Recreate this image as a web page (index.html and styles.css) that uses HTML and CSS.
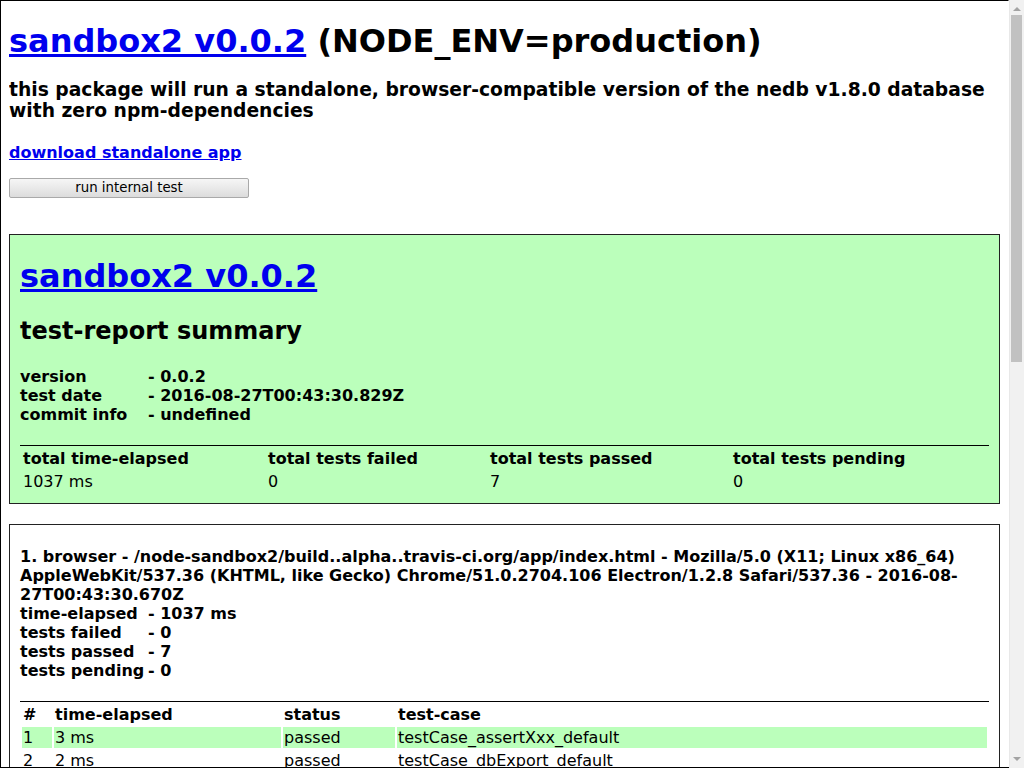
FILE: index.html
```html
<!DOCTYPE html>
<html lang="en">
<head>
<meta charset="utf-8">
<title>sandbox2 v0.0.2</title>
<link rel="stylesheet" href="styles.css">
</head>
<body>
<h1 class="page-title"><a href="#">sandbox2 v0.0.2</a> (NODE_ENV=production)</h1>
<h3 class="page-desc">this package will run a standalone, browser-compatible version of the nedb v1.8.0 database with zero npm-dependencies</h3>
<h4 class="page-download"><a href="#">download standalone app</a></h4>
<button class="test-button" type="button">run internal test</button>
<div class="test-report">
  <div class="platform summary">
    <h1><a href="#">sandbox2 v0.0.2</a></h1>
    <h2>test-report summary</h2>
    <h4>
      <span class="label">version</span>- 0.0.2<br>
      <span class="label">test date</span>- 2016-08-27T00:43:30.829Z<br>
      <span class="label">commit info</span>- undefined
    </h4>
    <table class="summary-table">
      <thead>
        <tr><th class="c1">total time-elapsed</th><th class="c2">total tests failed</th><th class="c3">total tests passed</th><th class="c4">total tests pending</th></tr>
      </thead>
      <tbody>
        <tr><td>1037 ms</td><td>0</td><td>7</td><td>0</td></tr>
      </tbody>
    </table>
  </div>
  <div class="platform">
    <h4 class="platform-info">1. browser - /node-sandbox2/build..alpha..travis-ci.org/app/index.html - Mozilla/5.0 (X11; Linux x86_64) AppleWebKit/537.36 (KHTML, like Gecko) Chrome/51.0.2704.106 Electron/1.2.8 Safari/537.36 - 2016-08-27T00:43:30.670Z<br>
      <span class="label">time-elapsed</span>- 1037 ms<br>
      <span class="label">tests failed</span>- 0<br>
      <span class="label">tests passed</span>- 7<br>
      <span class="label">tests pending</span>- 0
    </h4>
    <table class="case-table">
      <thead>
        <tr><th class="k1">#</th><th class="k2">time-elapsed</th><th class="k3">status</th><th class="k4">test-case</th></tr>
      </thead>
      <tbody>
        <tr><td>1</td><td>3 ms</td><td>passed</td><td>testCase_assertXxx_default</td></tr>
        <tr><td>2</td><td>2 ms</td><td>passed</td><td>testCase_dbExport_default</td></tr>
        <tr><td>3</td><td>12 ms</td><td>passed</td><td>testCase_dbImport_default</td></tr>
        <tr><td>4</td><td>5 ms</td><td>passed</td><td>testCase_dbReset_default</td></tr>
        <tr><td>5</td><td>980 ms</td><td>passed</td><td>testCase_dbTableCreate_default</td></tr>
        <tr><td>6</td><td>4 ms</td><td>passed</td><td>testCase_dbTableDrop_default</td></tr>
        <tr><td>7</td><td>31 ms</td><td>passed</td><td>testCase_testRun_default</td></tr>
      </tbody>
    </table>
  </div>
</div>
<div class="scrollbar" aria-hidden="true">
  <span class="arrow arrow-up"></span>
  <span class="thumb"></span>
  <span class="arrow arrow-down"></span>
</div>
</body>
</html>
```
FILE: styles.css
```css
html {
  box-sizing: border-box;
  width: 1009px;
  border: 1px solid #000;
  border-right-color: transparent;
  font-family: "DejaVu Sans", sans-serif;
}

html::after {
  content: "";
  position: fixed;
  left: 0;
  bottom: 0;
  width: 1009px;
  height: 1px;
  background: #000;
}

body {
  margin: 8px;
}

a {
  color: #0000ee;
}

.page-title {
  margin: 13.44px 0 18.44px;
}

.page-desc {
  margin: 18.44px 0 0;
}

.page-download {
  margin: 22.28px 0 15.5px;
}

.test-button {
  display: block;
  width: 240px;
  height: 20px;
  padding: 0;
  font: 13.33px "DejaVu Sans", sans-serif;
  color: #000;
  background: linear-gradient(#f6f6f6, #dcdcdc);
  border: 1px solid #a9a9a9;
  border-radius: 2px;
}

.test-report {
  margin-top: 36px;
}

.platform {
  margin-top: 20px;
  padding: 1px 10px 9px;
  border: 1px solid #222;
  background: #fff;
}

.platform.summary {
  background: #bbffbb;
}

.platform h2 + h4 {
  margin-top: 22.28px;
}

.platform-info {
  margin-bottom: 20.28px;
}

.label {
  display: inline-block;
  width: 128px;
}

.platform table {
  width: 100%;
  border-top: 1px solid #000;
  text-align: left;
}

.case-table tbody tr:nth-child(odd) {
  background: #bbffbb;
}

.summary-table .c1 { width: 241px; }
.summary-table .c2 { width: 218px; }
.summary-table .c3 { width: 239px; }
.summary-table .c4 { width: 253px; }

.case-table .k1 { width: 28px; }
.case-table .k2 { width: 225px; }
.case-table .k3 { width: 110px; }
.case-table .k4 { width: 588px; }

.scrollbar {
  position: fixed;
  top: 0;
  right: 0;
  bottom: 0;
  width: 15px;
  background: #f1f1f1;
  border-left: 1px solid #e8e8e8;
  box-sizing: border-box;
}

.thumb {
  position: absolute;
  top: 15px;
  left: 1px;
  width: 11px;
  height: 347px;
  background: #c1c1c1;
}

.arrow {
  position: absolute;
  left: 3px;
  width: 0;
  height: 0;
  border-left: 4px solid transparent;
  border-right: 4px solid transparent;
}

.arrow-up {
  top: 7px;
  border-bottom: 4px solid #a3a3a3;
}

.arrow-down {
  bottom: 7px;
  border-top: 4px solid #a3a3a3;
}
```
